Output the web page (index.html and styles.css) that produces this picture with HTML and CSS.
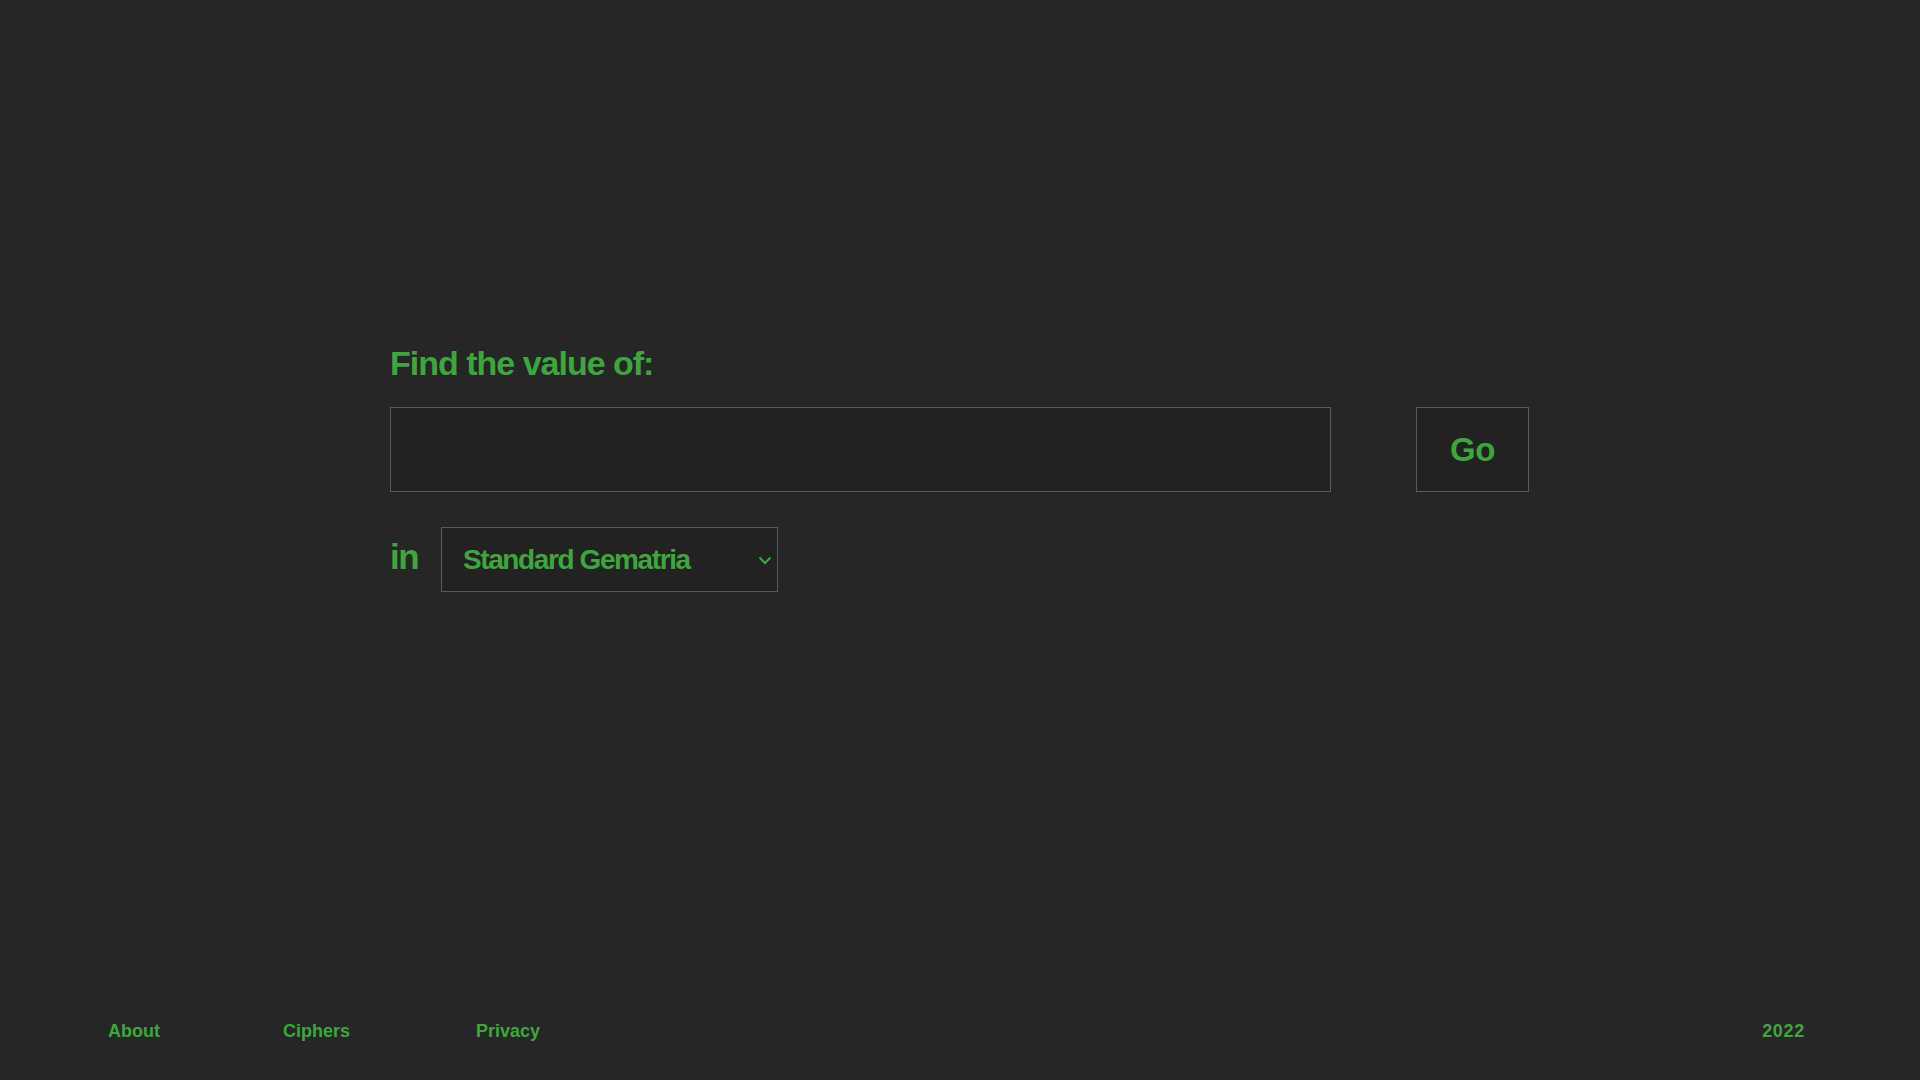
FILE: index.html
```html
<!DOCTYPE html>
<html lang="en">
<head>
<meta charset="utf-8">
<title>Gematria</title>
<link rel="stylesheet" href="styles.css">
</head>
<body>
<div class="page">
  <main class="main">
    <div class="container">
      <h1 class="title">Find the value of:</h1>
      <form class="search">
        <input class="text-input" type="text" aria-label="Text">
        <button class="go" type="button">Go</button>
      </form>
      <div class="cipher-row">
        <span class="in">in</span>
        <div class="select-wrap">
          <select class="select">
            <option>Standard Gematria</option>
          </select>
          <svg class="chevron" width="14" height="9" viewBox="0 0 14 9" aria-hidden="true">
            <path d="M1.5 1.5 L7 7 L12.5 1.5" fill="none" stroke="#3ca83c" stroke-width="2"/>
          </svg>
        </div>
      </div>
    </div>
  </main>
  <footer class="footer">
    <nav class="links">
      <a href="#">About</a>
      <a href="#">Ciphers</a>
      <a href="#" class="privacy">Privacy</a>
    </nav>
    <span class="year">2022</span>
  </footer>
</div>
</body>
</html>
```
FILE: styles.css
```css
html, body {
  margin: 0;
  padding: 0;
  background: #262626;
  color: #3ca83c;
  font-family: "Liberation Sans", Arial, sans-serif;
  font-weight: 700;
}
.page {
  min-height: 100vh;
  display: flex;
  flex-direction: column;
}
.main {
  flex: 1;
  padding-top: 346px;
}
.container {
  width: 1140px;
  margin: 0 auto;
}
.title {
  margin: 0 0 27px 0;
  font-size: 34px;
  line-height: 1;
  letter-spacing: -1px;
  font-weight: 700;
}
.search {
  display: flex;
  gap: 85px;
  margin: 0 0 35px 0;
}
.text-input {
  box-sizing: border-box;
  width: 941px;
  height: 85px;
  background: #222222;
  border: 1px solid #5a5a5a;
  border-radius: 0;
  outline: none;
  color: #3ca83c;
  font: inherit;
  font-size: 30px;
  padding: 0 20px;
}
.go {
  box-sizing: border-box;
  width: 113px;
  height: 85px;
  background: #222222;
  border: 1px solid #5a5a5a;
  border-radius: 0;
  color: #3ca83c;
  font-family: inherit;
  font-weight: 700;
  font-size: 33px;
  letter-spacing: -0.5px;
  padding: 0;
  cursor: pointer;
}
.cipher-row {
  display: flex;
  align-items: center;
  gap: 20px;
}
.in {
  font-size: 35px;
  line-height: 1;
  letter-spacing: -1.5px;
  width: 31px;
  position: relative;
  top: -3px;
}
.select-wrap {
  position: relative;
}
.select {
  appearance: none;
  -webkit-appearance: none;
  box-sizing: border-box;
  width: 337px;
  height: 65px;
  background: #222222;
  border: 1px solid #5a5a5a;
  border-radius: 0;
  color: #3ca83c;
  font-family: inherit;
  font-weight: 700;
  font-size: 28px;
  letter-spacing: -1.4px;
  padding: 0 0 0 21px;
  outline: none;
}
.chevron {
  position: absolute;
  right: 6px;
  top: 29px;
  pointer-events: none;
}
.footer {
  display: flex;
  justify-content: space-between;
  align-items: center;
  padding: 0 115px 40px 108px;
  font-size: 18px;
  line-height: 1;
}
.links {
  display: flex;
  gap: 123px;
}
.links .privacy {
  margin-left: 3px;
}
.links a, .year {
  color: #3ca83c;
  text-decoration: none;
}
.year {
  letter-spacing: 0.7px;
}
```
